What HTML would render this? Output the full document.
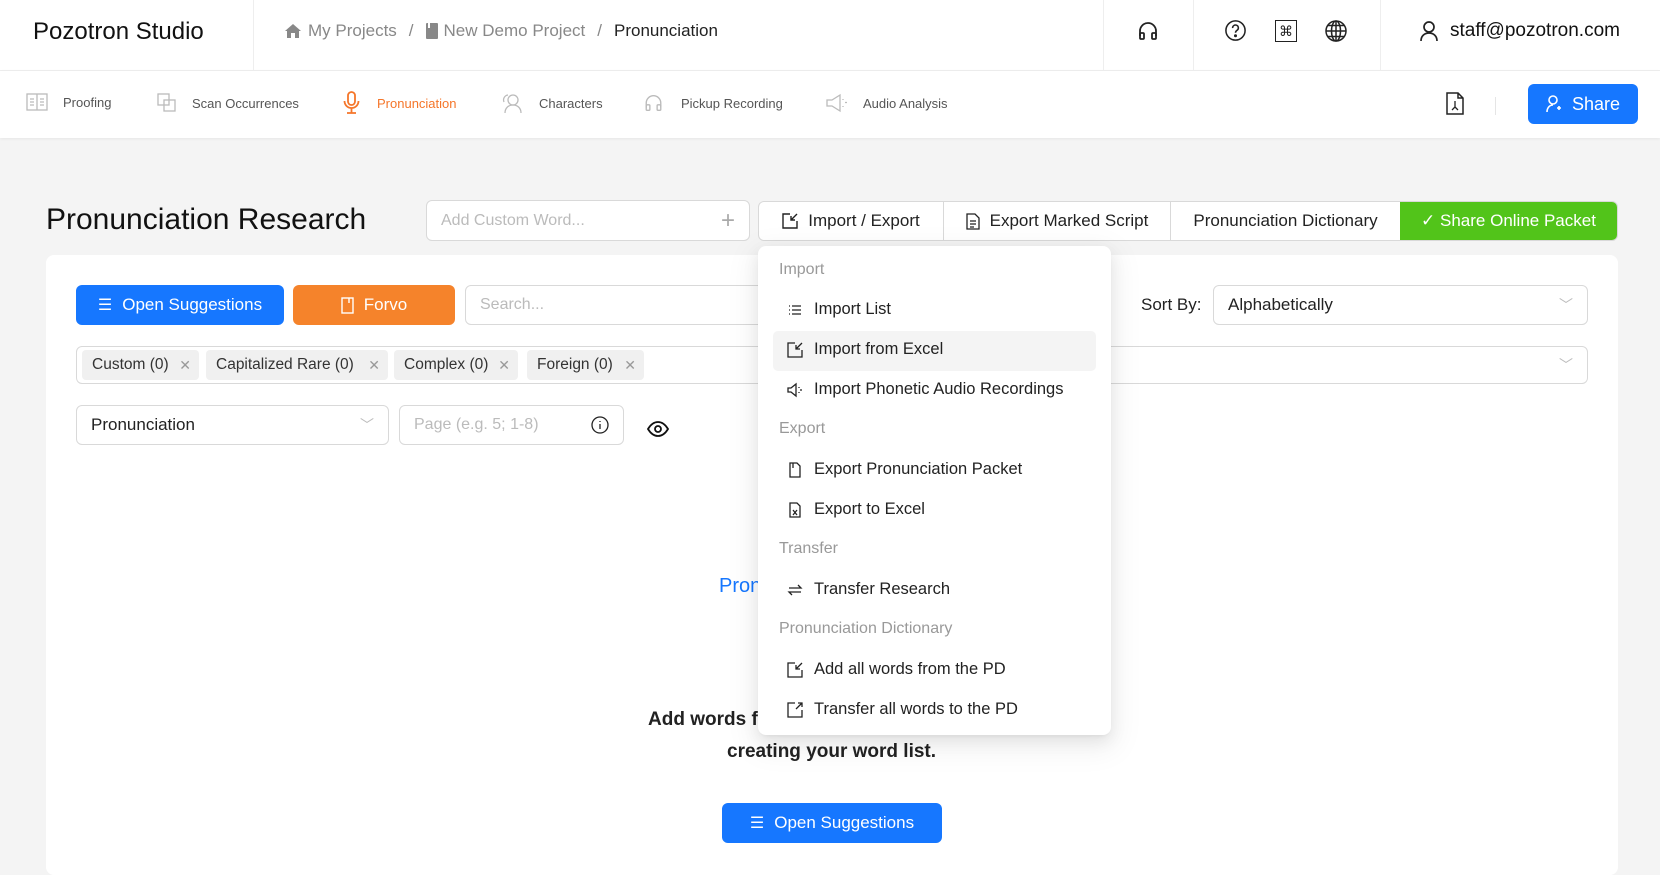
<!DOCTYPE html>
<html><head><meta charset="utf-8"><style>
*{box-sizing:border-box;margin:0;padding:0}
body{width:1660px;height:865px;overflow:hidden;background:#f4f4f4;font-family:"Liberation Sans",sans-serif;color:#222;position:relative}
.a{position:absolute}
.hdr{left:0;top:0;width:1660px;height:71px;background:#fff;border-bottom:1px solid #eee}
.sub{left:0;top:71px;width:1660px;height:67px;background:#fff;box-shadow:0 1px 3px rgba(0,0,0,.06)}
.vd{position:absolute;top:0;width:1px;height:71px;background:#eee}
.c{display:flex;align-items:center;white-space:nowrap}
.nav{font-size:13px;color:#555}
svg{display:block}
.btn{border-radius:6px;color:#fff;font-size:17px;display:flex;align-items:center;justify-content:center;gap:10px}
.inp{background:#fff;border:1px solid #d9d9d9;border-radius:6px;font-size:16px;color:#bbb;display:flex;align-items:center;padding:0 14px}
.tag{background:#f0f0f0;border-radius:4px;height:30px;top:350px;font-size:15.5px;color:#333;display:flex;align-items:center;padding:0 8px 0 10px;white-space:nowrap;justify-content:space-between}
.tag span{color:#999;margin-left:4px;font-size:14px}
.dd{left:758px;top:246px;width:353px;height:489px;background:#fff;border-radius:8px;box-shadow:0 6px 16px rgba(0,0,0,.08),0 3px 6px -4px rgba(0,0,0,.12),0 9px 28px 8px rgba(0,0,0,.05)}
.lb{position:absolute;left:21px;font-size:16px;color:#999}
.it{position:absolute;left:29px;font-size:16.5px;color:#222;display:flex;align-items:center;gap:11px;white-space:nowrap}
.it svg{width:16px;height:16px}
</style></head><body>
<div class="a hdr">
 <div class="a" style="left:33px;top:18px;font-size:24px;color:#111">Pozotron Studio</div>
 <div class="vd" style="left:253px"></div>
 <div class="a c" style="left:284px;top:21px;font-size:17px;color:#888;gap:6px">
  <svg width="18" height="16" viewBox="0 0 18 16"><path d="M9 1L1 8h2v7h4v-5h4v5h4V8h2z" fill="#888"/></svg>My Projects<span style="margin:0 6px">/</span>
  <svg width="12" height="16" viewBox="0 0 12 16"><rect x="0" y="0" width="12" height="16" rx="1" fill="#888"/><rect x="2" y="0" width="2" height="5" fill="#fff"/></svg>New Demo Project<span style="margin:0 6px">/</span><span style="color:#222">Pronunciation</span>
 </div>
 <div class="vd" style="left:1103px"></div><div class="vd" style="left:1193px"></div><div class="vd" style="left:1380px"></div>
 <svg class="a" style="left:1137px;top:20px" width="22" height="22" viewBox="0 0 22 22" fill="none" stroke="#222" stroke-width="1.8"><path d="M3 16v-5a8 8 0 0116 0v5"/><rect x="3" y="13" width="4" height="6" rx="1"/><rect x="15" y="13" width="4" height="6" rx="1"/></svg>
 <svg class="a" style="left:1224px;top:19px" width="23" height="23" viewBox="0 0 24 24" fill="none" stroke="#222" stroke-width="1.6"><circle cx="12" cy="12" r="10"/><path d="M9 9.5a3 3 0 115 2c-1 .8-2 1.2-2 2.8"/><circle cx="12" cy="17.5" r=".8" fill="#222"/></svg>
 <div class="a c" style="left:1275px;top:20px;width:22px;height:22px;border:1.6px solid #222;justify-content:center;font-size:14px">⌘</div>
 <svg class="a" style="left:1324px;top:19px" width="24" height="24" viewBox="0 0 24 24" fill="none" stroke="#222" stroke-width="1.5"><circle cx="12" cy="12" r="10"/><ellipse cx="12" cy="12" rx="4.5" ry="10"/><path d="M2 12h20M4 6.5h16M4 17.5h16M12 2v20"/></svg>
 <svg class="a" style="left:1419px;top:20px" width="20" height="22" viewBox="0 0 20 22" fill="none" stroke="#222" stroke-width="1.7"><circle cx="10" cy="7" r="5"/><path d="M2 21c0-5 3.5-8 8-8s8 3 8 8"/></svg>
 <div class="a" style="left:1450px;top:20px;font-size:19px;color:#111">staff@pozotron.com</div>
</div>
<div class="a sub">
 <div class="a c nav" style="left:26px;top:22px;gap:15px"><svg width="22" height="18" viewBox="0 0 22 18" fill="none" stroke="#bbb" stroke-width="1.3"><rect x="1" y="1" width="20" height="16"/><path d="M11 1v16M4 6h4M4 9h4M4 12h4M14 6h4M14 9h4M14 12h4"/></svg>Proofing</div>
 <div class="a c nav" style="left:157px;top:22px;gap:15px"><svg width="20" height="20" viewBox="0 0 20 20" fill="none" stroke="#bbb" stroke-width="1.3"><rect x="1" y="1" width="11" height="11"/><rect x="7" y="7" width="11" height="11"/></svg>Scan Occurrences</div>
 <div class="a c nav" style="left:343px;top:20px;gap:17px;color:#f5762a"><svg width="17" height="24" viewBox="0 0 17 24" fill="none" stroke="#f5762a" stroke-width="1.8"><rect x="5" y="1" width="7" height="13" rx="3.5"/><path d="M1.5 10a7 7 0 0014 0M8.5 17v5M4 22h9"/></svg>Pronunciation</div>
 <div class="a c nav" style="left:502px;top:21px;gap:17px"><svg width="20" height="22" viewBox="0 0 20 22" fill="none" stroke="#bbb" stroke-width="1.3"><circle cx="11" cy="8" r="5"/><path d="M3 21c0-5 3.5-8 8-8s8 3 8 8M6 3a5 5 0 00-4 7"/></svg>Characters</div>
 <div class="a c nav" style="left:643px;top:22px;gap:17px"><svg width="21" height="20" viewBox="0 0 22 22" fill="none" stroke="#bbb" stroke-width="1.5"><path d="M3 16v-5a8 8 0 0116 0v5"/><rect x="3" y="13" width="4" height="6" rx="1"/><rect x="15" y="13" width="4" height="6" rx="1"/></svg>Pickup Recording</div>
 <div class="a c nav" style="left:826px;top:22px;gap:15px"><svg width="22" height="20" viewBox="0 0 22 20" fill="none" stroke="#bbb" stroke-width="1.3"><path d="M1 7h5l8-5v16l-8-5H1z"/><path d="M17 6v1M17 13v1M19 9.5h2"/></svg>Audio Analysis</div>
 <svg class="a" style="left:1446px;top:21px" width="18" height="23" viewBox="0 0 18 23" fill="none" stroke="#222" stroke-width="1.5"><path d="M1 1h11l5 5v16H1z M12 1v5h5"/><path d="M9 9v6l-3 3M9 15l3 3" stroke-width="1.3"/></svg>
 <div class="a" style="left:1495px;top:26px;width:1px;height:18px;background:#e5e5e5"></div>
 <div class="a btn" style="left:1528px;top:13px;width:110px;height:40px;background:#1677ff;font-size:18px"><svg width="16" height="18" viewBox="0 0 16 18" fill="none" stroke="#fff" stroke-width="1.6"><circle cx="7" cy="5" r="4"/><path d="M1 17c0-4 2.5-7 6-7M11 13h4M13 11v4"/></svg>Share</div>
</div>

<div class="a" style="left:46px;top:203px;font-size:30px;color:#111">Pronunciation Research</div>
<div class="a inp" style="left:426px;top:200px;width:324px;height:41px;justify-content:space-between">Add Custom Word...<span style="font-size:24px;color:#aaa;font-weight:300">+</span></div>
<div class="a" style="left:758px;top:201px;width:860px;height:40px;display:flex;border:1px solid #d9d9d9;border-radius:6px;background:#fff;overflow:hidden;font-size:17px">
 <div class="c" style="width:185px;justify-content:center;gap:10px;border-right:1px solid #d9d9d9"><svg width="16" height="16" viewBox="0 0 16 16" fill="none" stroke="#222" stroke-width="1.4"><path d="M8 1H1v14h14V8M9 7l6-6M9 3v4h4"/></svg>Import / Export</div>
 <div class="c" style="width:227px;justify-content:center;gap:10px;border-right:1px solid #d9d9d9"><svg width="14" height="17" viewBox="0 0 14 17" fill="none" stroke="#222" stroke-width="1.3"><path d="M1 1h8l4 4v11H1z M4 8h6M4 11h6M4 14h4"/></svg>Export Marked Script</div>
 <div class="c" style="width:229px;justify-content:center">Pronunciation Dictionary</div>
 <div class="c" style="flex:1;justify-content:center;gap:10px;background:#52c41a;color:#fff">✓ Share Online Packet</div>
</div>

<div class="a" style="left:46px;top:255px;width:1572px;height:620px;background:#fff;border-radius:8px"></div>
<div class="a btn" style="left:76px;top:285px;width:208px;height:40px;background:#1677ff"><span style="font-size:16px">☰</span>Open Suggestions</div>
<div class="a btn" style="left:293px;top:285px;width:162px;height:40px;background:#f5832b"><svg width="13" height="17" viewBox="0 0 13 17" fill="none" stroke="#fff" stroke-width="1.4"><rect x="1" y="1" width="11" height="15"/><path d="M8 1v5"/></svg>Forvo</div>
<div class="a inp" style="left:465px;top:285px;width:300px;height:40px">Search...</div>
<div class="a" style="left:1141px;top:295px;font-size:17px">Sort By:</div>
<div class="a inp" style="left:1213px;top:285px;width:375px;height:40px;color:#222;font-size:17px;justify-content:space-between">Alphabetically<span style="color:#bbb;font-size:14px">﹀</span></div>
<div class="a inp" style="left:76px;top:346px;width:1512px;height:38px;justify-content:flex-end"><span style="color:#bbb;font-size:14px">﹀</span></div>
<div class="a tag" style="left:82px;width:117px">Custom (0)<span>✕</span></div>
<div class="a tag" style="left:206px;width:182px">Capitalized Rare (0)<span>✕</span></div>
<div class="a tag" style="left:394px;width:124px">Complex (0)<span>✕</span></div>
<div class="a tag" style="left:527px;width:117px">Foreign (0)<span>✕</span></div>
<div class="a inp" style="left:76px;top:405px;width:313px;height:40px;color:#222;font-size:17px;justify-content:space-between">Pronunciation<span style="color:#bbb;font-size:14px">﹀</span></div>
<div class="a inp" style="left:399px;top:405px;width:225px;height:40px;justify-content:space-between">Page (e.g. 5; 1-8)<svg width="18" height="18" viewBox="0 0 18 18" fill="none" stroke="#222" stroke-width="1.3"><circle cx="9" cy="9" r="8"/><path d="M9 8v5M9 5v1"/></svg></div>
<svg class="a" style="left:647px;top:421px" width="22" height="16" viewBox="0 0 22 16" fill="none" stroke="#111" stroke-width="1.8"><path d="M1 8c3-5 6-7 10-7s7 2 10 7c-3 5-6 7-10 7S4 13 1 8z"/><circle cx="11" cy="8" r="3"/></svg>
<div class="a" style="left:719px;top:575px;font-size:20px;color:#1677ff">Pronunciation</div>
<div class="a" style="left:648px;top:709px;font-size:19px;font-weight:bold;color:#222">Add words from suggestions</div>
<div class="a" style="left:727px;top:741px;font-size:19px;font-weight:bold;color:#222">creating your word list.</div>
<div class="a btn" style="left:722px;top:803px;width:220px;height:40px;background:#1677ff"><span style="font-size:16px">☰</span>Open Suggestions</div>

<div class="a dd">
 <div class="lb" style="top:15px">Import</div>
 <div class="it" style="top:54px"><svg viewBox="0 0 16 16" fill="none" stroke="#222" stroke-width="1.3"><path d="M2 4h1M2 8h1M2 12h1M5 4h9M5 8h9M5 12h9"/></svg>Import List</div>
 <div style="position:absolute;left:15px;top:85px;width:323px;height:40px;background:#f4f4f4;border-radius:5px"></div>
 <div class="it" style="top:94px"><svg viewBox="0 0 16 16" fill="none" stroke="#222" stroke-width="1.3"><path d="M8 1H1v14h14V8M9 7l6-6M9 3v4h4"/></svg>Import from Excel</div>
 <div class="it" style="top:134px"><svg viewBox="0 0 16 16" fill="none" stroke="#222" stroke-width="1.3"><path d="M1 6h3l5-4v12l-5-4H1zM12 5v1M12 10v1M13 8h2"/></svg>Import Phonetic Audio Recordings</div>
 <div class="lb" style="top:174px">Export</div>
 <div class="it" style="top:214px"><svg viewBox="0 0 16 16" fill="none" stroke="#222" stroke-width="1.3"><path d="M3 1h7l3 3v11H3zM6 1v5"/></svg>Export Pronunciation Packet</div>
 <div class="it" style="top:254px"><svg viewBox="0 0 16 16" fill="none" stroke="#222" stroke-width="1.3"><path d="M3 1h7l3 3v11H3zM6 8l4 5M10 8l-4 5"/></svg>Export to Excel</div>
 <div class="lb" style="top:294px">Transfer</div>
 <div class="it" style="top:334px"><svg viewBox="0 0 16 16" fill="none" stroke="#222" stroke-width="1.3"><path d="M2 6h12l-3-3M14 10H2l3 3"/></svg>Transfer Research</div>
 <div class="lb" style="top:374px">Pronunciation Dictionary</div>
 <div class="it" style="top:414px"><svg viewBox="0 0 16 16" fill="none" stroke="#222" stroke-width="1.3"><path d="M8 1H1v14h14V8M9 7l6-6M9 3v4h4"/></svg>Add all words from the PD</div>
 <div class="it" style="top:454px"><svg viewBox="0 0 16 16" fill="none" stroke="#222" stroke-width="1.3"><path d="M8 1H1v14h14V8M9 7l6-6M11 1h4v4"/></svg>Transfer all words to the PD</div>
</div>
</body></html>
